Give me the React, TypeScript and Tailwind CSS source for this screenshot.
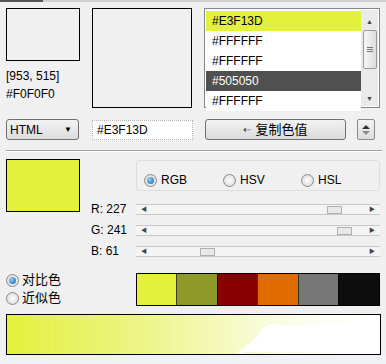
const font = { fontFamily: '"Liberation Sans", "Noto Sans CJK SC", sans-serif' };

const history = [
  { hex: '#E3F13D', cls: 'bg-[#e3f13d] text-black' },
  { hex: '#FFFFFF', cls: 'bg-white text-black' },
  { hex: '#FFFFFF', cls: 'bg-white text-black' },
  { hex: '#505050', cls: 'bg-[#505050] text-white' },
  { hex: '#FFFFFF', cls: 'bg-white text-black' },
];

const sliders = [
  { label: 'R: 227', pos: 191 },
  { label: 'G: 241', pos: 201 },
  { label: 'B: 61', pos: 64 },
];

const swatches = ['bg-[#e3f13d]', 'bg-[#8e9a27]', 'bg-[#880000]', 'bg-[#e06c00]', 'bg-[#777777]', 'bg-[#0d0d0d]'];

function Radio({ on }: { on?: boolean }) {
  return (
    <span className="w-[13px] h-[13px] shrink-0 rounded-full border border-[#8a8a8a] bg-[radial-gradient(circle,#ffffff,#d4d4d4)] flex items-center justify-center">
      {on && <span className="w-[7px] h-[7px] rounded-full bg-[radial-gradient(circle_at_35%_35%,#8fd0ff,#1a5f9e)]" />}
    </span>
  );
}

function Slider({ pos }: { pos: number }) {
  return (
    <div className="relative w-[244px] h-[11px] border-y border-[#c8c8c8] bg-[#f4f4f4] flex items-center justify-between px-[5px]">
      <span className="text-[6px] leading-none text-[#444]">◀</span>
      <span className="absolute top-[1px] h-[8px] w-[15px] border border-[#b0b0b0] bg-[#e8e8e8]" style={{ left: pos }} />
      <span className="text-[6px] leading-none text-[#444]">▶</span>
    </div>
  );
}

export default function App() {
  return (
    <div className="w-[386px] h-[364px] bg-[#f0f0f0] text-[12px] text-black overflow-hidden flex flex-col" style={font}>
      <div className="flex h-[2px] shrink-0">
        <div className="w-[43px] bg-[#555]" />
        <div className="flex-1 bg-[#cfcfcf]" />
      </div>

      <div className="flex px-[6px] pt-[6px]">
        <div className="w-[74px] flex flex-col">
          <div className="h-[53px] border border-black" />
          <div className="mt-[8px] leading-[14px]">[953, 515]</div>
          <div className="mt-[4px] leading-[14px]">#F0F0F0</div>
        </div>
        <div className="ml-[12px] w-[101px] h-[100px] border border-black" />
        <div className="ml-[12px] w-[177px] h-[100px] border border-[#828790] bg-white flex p-[1px]">
          <div className="flex-1 pt-[1px]">
            {history.map((h, i) => (
              <div key={i} className={`h-[20px] pl-[6px] flex items-center ${h.cls}`}>
                {h.hex}
              </div>
            ))}
          </div>
          <div className="w-[17px] bg-[#eaeaea] flex flex-col items-center">
            <span className="text-[7px] leading-none mt-[8px] text-[#444]">▲</span>
            <div className="mt-[5px] w-[14px] h-[39px] rounded-[2px] border border-[#9a9a9a] bg-[linear-gradient(to_right,#f6f6f6,#dcdcdc)] flex flex-col items-center justify-center gap-[1px]">
              <span className="w-[6px] h-px bg-[#777]" />
              <span className="w-[6px] h-px bg-[#777]" />
              <span className="w-[6px] h-px bg-[#777]" />
            </div>
            <span className="text-[7px] leading-none mt-auto mb-[4px] text-[#444]">▼</span>
          </div>
        </div>
      </div>

      <div className="flex items-center px-[6px] mt-[11px] h-[21px]">
        <div className="w-[73px] h-[21px] rounded-[3px] border border-[#707070] bg-[linear-gradient(#f2f2f2,#dddddd)] flex items-center justify-between pl-[3px] pr-[6px]">
          <span>HTML</span>
          <span className="text-[8px] leading-none">▼</span>
        </div>
        <div className="ml-[13px] w-[101px] h-[20px] bg-white border border-dotted border-[#b5b5b5] flex items-center pl-[4px]">
          #E3F13D
        </div>
        <div className="ml-[12px] w-[141px] h-[21px] rounded-[3px] border border-[#707070] bg-[linear-gradient(#f2f2f2,#dcdcdc)] flex items-center justify-center gap-[4px] text-[13px]">
          <span className="text-[10px] text-[#333]">⇠</span>
          <span>复制色值</span>
        </div>
        <div className="ml-[11px] w-[18px] h-[21px] rounded-[2px] border border-[#8a8a8a] bg-[linear-gradient(#f4f4f4,#dcdcdc)] flex items-center justify-center">
          <svg width="8" height="10" viewBox="0 0 8 10">
            <polygon points="4,0 8,4 0,4" fill="#333" />
            <polygon points="0,6 8,6 4,10" fill="#8a8a8a" />
          </svg>
        </div>
      </div>

      <div className="mx-[6px] mt-[10px] h-[2px] border-t border-[#a0a0a0] border-b border-b-white w-[376px]" />

      <div className="flex px-[6px] mt-[7px]">
        <div className="w-[74px] h-[53px] border border-black bg-[#e3f13d]" />
        <div className="ml-[10px] flex flex-col">
          <div className="ml-[46px] mt-[1px] w-[244px] h-[31px] rounded-[3px] border border-[#d5dfe5] flex items-end pb-[3px] pl-[7px]">
            <label className="flex items-center gap-[4px] w-[79px] leading-[14px]"><Radio on />RGB</label>
            <label className="flex items-center gap-[4px] w-[78px] leading-[14px]"><Radio />HSV</label>
            <label className="flex items-center gap-[4px] leading-[14px]"><Radio />HSL</label>
          </div>
          <div className="flex flex-col gap-[9px] mt-[12px]">
            {sliders.map((s) => (
              <div key={s.label} className="flex items-center h-[12px]">
                <span className="w-[46px] pl-[1px]">{s.label}</span>
                <Slider pos={s.pos} />
              </div>
            ))}
          </div>
        </div>
      </div>

      <div className="flex px-[6px] mt-[16px]">
        <div className="w-[130px] flex flex-col gap-[2px] -mt-[1px]">
          <label className="flex items-center gap-[3px] h-[16px] text-[13px]"><Radio on />对比色</label>
          <label className="flex items-center gap-[3px] h-[16px] text-[13px]"><Radio />近似色</label>
        </div>
        <div className="flex w-[245px] h-[33px] border border-black">
          {swatches.map((c, i) => (
            <div key={i} className={`flex-1 ${c} ${i > 0 ? 'border-l border-black/60' : ''}`} />
          ))}
        </div>
      </div>

      <div className="relative mx-[6px] mt-[8px] w-[375px] h-[41px] border border-black bg-[linear-gradient(to_right,#e3f13d,#ebf47a_30%,#f2f8ae_52%,#f7fbd2_66%,#fcfdf0_80%,#ffffff)]">
        <svg className="absolute inset-0" width="373" height="39" viewBox="0 0 373 39">
          <polygon points="254,15 262,9 300,11 330,8 373,4 373,39 327,39 327,37 236,37 236,39 230,39 240,30 250,22" fill="#ffffff" />
        </svg>
      </div>

      <div className="flex-1 mt-[1px] bg-[#f0f2f6]" />
    </div>
  );
}
